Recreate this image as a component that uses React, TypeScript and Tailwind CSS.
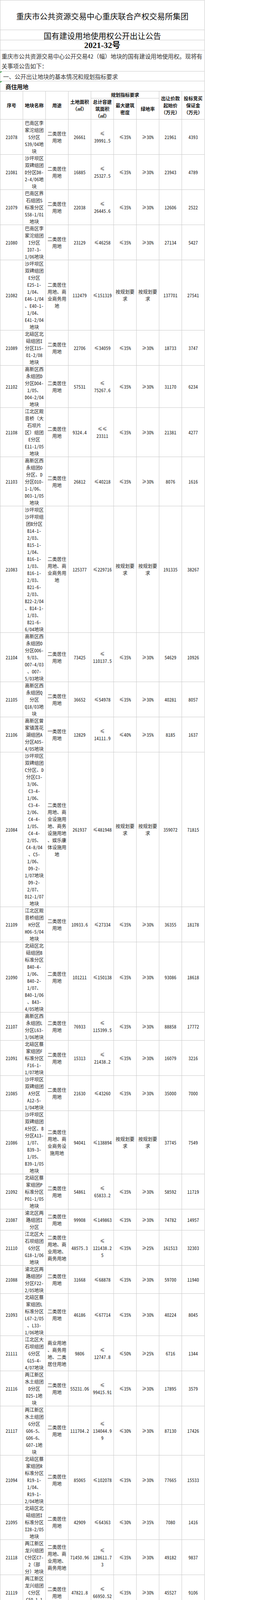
const R2 = '二类居住|用地';
const PLAN = '按规划要|求';

// [序号, 地块名称, 用途, 土地面积, 总计容建筑面积, 最大建筑密度, 绿地率, 起始价, 保证金]
// "|" marks a line break inside the cell
const rows: string[][] = [
  ['21078', '巴南区李|家沱组团|S分区|S39/04地|块', R2, '26661', '≤|39991.5', '≤35%', '≥30%', '21961', '4393'],
  ['21081', '沙坪坝区|双碑组团|D分区D8-|2-4/06地|块', R2, '16885', '≤|25327.5', '≤35%', '≥30%', '23943', '4789'],
  ['21079', '巴南区界|石组团S|标准分区|S58-1/01|地块', R2, '22038', '≤|26445.6', '≤35%', '≥30%', '12606', '2522'],
  ['21080', '巴南区李|家沱组团|I分区|I07-3-|1/06地块', R2, '23129', '≤46258', '≤35%', '≥30%', '27134', '5427'],
  ['21082', '沙坪坝区|双碑组团|E分区|E25-1-|1/04、|E46-1/04|、E40-1-|1/04、|E41-2/04|地块', '二类居住|用地、商|业商务用|地', '112479', '≤151319', PLAN, PLAN, '137701', '27541'],
  ['21089', '北碚区北|碚组团I|分区I15-|01-2/08|地块', R2, '22706', '≤34059', '≤35%', '≥30%', '18733', '3747'],
  ['21102', '高新区西|永组团D|分区D04-|1/05、|D04-2/04|地块', R2, '57531', '≤|75267.6', '≤35%', '≥30%', '31170', '6234'],
  ['21108', '江北区观|音桥（大|石坝片|区）组团|E分区|E11-1/05|地块', R2, '9324.4', '≤≤|23311', '≤35%', '≥30%', '21381', '4277'],
  ['21103', '高新区西|永组团O|分区、D|分区O10-|1-1/06、|D03-1/05|地块', R2, '26812', '≤40218', '≤35%', '≥30%', '8076', '1616'],
  ['21083', '沙坪坝区|沙坪坝组|团B分区|B14-1-|2/03、|B15-1-|1/04、|B16-1-|1/03、|B16-1-|2/03、|B21-6-|2/03、|B22-2/04|、B14-1-|1/03、|B21-6-|6/04地块', '二类居住|用地、商|业商务用|地', '125377', '≤229716', PLAN, PLAN, '191335', '38267'],
  ['21104', '高新区西|永组团O|分区O06-|9/03、|O07-4/03|、O07-|5/03地块', R2, '73425', '≤|110137.5', '≤35%', '≥30%', '54629', '10926'],
  ['21105', '高新区西|永组团Q|分区|Q18/03地|块', R2, '36652', '≤54978', '≤35%', '≥30%', '40281', '8057'],
  ['21106', '高新区曾|家镇莲花|湖组团A|分区A05-|4/05地块', '一类居住|用地', '12829', '≤|14111.9', '≤40%', '≥35%', '8185', '1637'],
  ['21084', '沙坪坝区|双碑组团|C分区、D|分区C3-|3/06、|C3-4-|1/06、|C3-4-|2/06、|C4-4-|1/05、|C4-4-|2/05、|C4-8/04|、C5-|1/06、|D9-2-|1/07地块|D9-2-|2/07、|D12-1/07|地块', '二类居住|用地、商|业设施用|地、商务|设施用地|、娱乐康|体设施用|地', '261937', '≤481948', PLAN, PLAN, '359072', '71815'],
  ['21109', '江北区观|音桥组团|H分区|H06-5/04|地块', R2, '10933.6', '≤27334', '≤35%', '≥30%', '36355', '18178'],
  ['21090', '北碚区北|碚组团B|标准分区|B40-4-|1/06、|B40-2-|1/07、|B40-1/06|、B43-|4/05地块', R2, '101211', '≤150138', '≤35%', '≥30%', '93086', '18618'],
  ['21107', '高新区西|永组团L|分区L63-|3/06地块', R2, '76933', '≤|115399.5', '≤35%', '≥30%', '88858', '17772'],
  ['21091', '北碚区蔡|家组团F|标准分区|F16-1-|1/07地块', R2, '15313', '≤|21438.2', '≤35%', '≥30%', '16079', '3216'],
  ['21085', '沙坪坝区|双碑组团|A分区|A12-5-|1/04地块', R2, '21630', '≤43260', '≤35%', '≥30%', '35000', '7000'],
  ['21086', '沙坪坝区|双碑组团|A分区、B|分区A13-|1/07、|B39-3-|1/05、|B39-1/05|地块', '二类居住|用地、商|业商务设|施用地', '94041', '≤138894', PLAN, PLAN, '37745', '7549'],
  ['21092', '北碚区蔡|家组团P|标准分区|P01-1/05|地块', R2, '54861', '≤|65833.2', '≤35%', '≥30%', '58592', '11719'],
  ['21087', '渝北区两|路组团I|分区', R2, '99908', '≤149863', '≤35%', '≥30%', '74782', '14957'],
  ['21110', '江北区大|石坝组团|G分区|G18-1/06|地块', '二类居住|用地、商|业用地、|商务用地', '48575.3', '≤|121438.2|5', '≤35%', '≥25%', '161513', '32303'],
  ['21088', '渝北区两|路组团F|分区F22-|2/05地块', R2, '31668', '≤68878', '≤35%', '≥30%', '59700', '11940'],
  ['21093', '北碚区蔡|家组团L|标准分区|L67-2/05|、L33-|1/06地块', R2, '46186', '≤67714', '≤35%', '≥30%', '40224', '8045'],
  ['21111', '江北区大|石坝组团|G分区|G15-4-|4/07地块', '商业用地|、商务用|地、二类|居住用地', '9806', '≤|12747.8', '≤50%', '≥25%', '6716', '1344'],
  ['21116', '两江新区|水土组团|D分区|D25-1地|块', R2, '55231.06', '≤|99415.91', '≤35%', '≥30%', '17895', '3579'],
  ['21117', '两江新区|水土组团|G分区|G06-5、|G06-6、|G07-1地|块', R2, '111704.2', '≤|134044.9|9', '≤30%', '≥30%', '87130', '17426'],
  ['21094', '北碚区蔡|家组团R|标准分区|R19-1-|1/04、|R19-1-|2/04地块', R2, '85065', '≤102078', '≤35%', '≥30%', '77665', '15533'],
  ['21095', '北碚区北|碚组团I|标准分区|I28-2/05|地块', R2, '42909', '≤64363', '≤30%', '≥35%', '7080', '1416'],
  ['21118', '两江新区|龙兴组团|C分区C7-|2（部|分）地块', '二类居住|用地、商|业用地、|商务用地', '71450.96', '≤|128611.7|3', '≤35%', '≥30%', '49182', '9837'],
  ['21119', '两江新区|龙兴组团|C分区|C50-1-1|地块', R2, '47821.8', '≤|66950.52', '≤35%', '≥30%', '45527', '9106'],
  ['21097', '大渡口区|大渡口组|团P分区|P2-3-2、|P2-3-6地|块', R2, '79854', '≤159708', '≤35%', PLAN, '127766', '25554'],
  ['21098', '大渡口区|大渡口组|团P分区|P2-8-2、|P2-8-3地|块', R2, '116823', '≤|175234.5', '≤35%', '≥35%', '140187', '28038'],
  ['21096', '南岸区弹|子石组团|J分区J4-|1/04、|J4-7/04|、J5-|6/04、|J15-1/04|、J3-|2/04、|J7-1/03|、J2-|1/04、|J4-5/04|地块', '商业用地|、二类居|住用地', '177152', '≤|299533.3', PLAN, PLAN, '300000', '60000'],
  ['21099', '大渡口区|大渡口组|团P分区|P2-8-7、|P2-8-8地|块', R2, '60395', '≤|90592.5', '≤35%', '≥35%', '72474', '14495'],
  ['21100', '大渡口区|大渡口组|团P分区|P2-10-5|地块', R2, '81927', '≤|98312.4', '≤35%', '≥35%', '78649', '15730'],
  ['21101', '大渡口区|大渡口组|团P分区|P2-12-2|、P2-12-|3、P2-|12-5地块', R2, '120175', '≤|180262.5', '≤35%', '≥35%', '144210', '28842'],
  ['21112', '九龙坡区|大渡口组|团D分区|D14-1-|1/03、|D11-1/03|、D12-|1/03、|D2-1/04|、D13-|1/03、|D13-2/04|地块', '二类居住|用地、文|化设施用|地、体育|用地、其|它商务用|地、商业|用地、社|会停车场|用地', '117234', '≤|237733.3', PLAN, PLAN, '150407', '30082'],
  ['21113', '九龙坡区|中梁山组|团G分区|G29-1-1-|1/04、|G26-8/05|、G27-|2/05地块', R2, '37540', '≤59446', PLAN, '≥30%', '40000', '8000'],
  ['21114', '九龙坡区|中梁山组|团D分区|D19/06、|D20-1/06|地块', '二类居住|用地、商|业用地、|商务用地', '75492', '≤188730', '≤35%', '≥30%', '114051', '22811'],
  ['21115', '九龙坡区|大杨石组|团W分区|W06-1-|1/05、|W05-2/06|地块', R2, '21232', '≤53080', '≤35%', '≥30%', '41855', '8371'],
];

function Lines({ text }: { text: string }) {
  return (
    <>
      {text.split('|').map((line, i) => (
        <span key={i} className="block whitespace-nowrap leading-[18px]">
          {line}
        </span>
      ))}
    </>
  );
}

// little green corner mark Excel leaves on text cells
function GreenMark() {
  return (
    <span className="absolute left-0 top-0 h-0 w-0 border-r-[4px] border-t-[4px] border-r-transparent border-t-[#1e9a2e]" />
  );
}

export default function App() {
  return (
    <div className="bg-white font-['Noto_Sans_Mono_CJK_SC','Noto_Sans_CJK_SC',sans-serif] text-[#222]">
      <div className="w-[523px] border-l border-t border-[#cacaca]">
        {/* title block */}
        <div className="flex h-[76px] items-center justify-center border-b border-r border-[#cacaca] pt-[7px] text-[20px] leading-none text-[#111]">
          重庆市公共资源交易中心重庆联合产权交易所集团
        </div>
        <div className="flex h-[26px] items-center justify-center border-b border-r border-[#cacaca] pt-[5px] text-[20px] leading-none text-[#111]">
          国有建设用地使用权公开出让公告
        </div>
        <div className="flex h-[26px] items-center justify-center border-b border-r border-[#cacaca] pt-[3px] font-['Liberation_Serif','Noto_Sans_CJK_SC',serif] text-[21.33px] font-bold leading-none text-[#111]">
          2021-32号
        </div>
        <div className="h-[54px] overflow-hidden border-b border-r border-[#cacaca] pl-[3px] pt-[1.5px] text-[14.67px] font-light leading-[25px] text-[#333]">
          <p className="whitespace-nowrap">重庆市公共资源交易中心公开交易42（幅）地块的国有建设用地使用权。现将有</p>
          <p className="whitespace-nowrap">关事项公告如下：</p>
        </div>
        <div className="relative flex h-[25px] items-center border-b border-r border-[#cacaca] pl-[7px] pt-[2px] text-[14.67px] font-light leading-none text-[#333]">
          <GreenMark />
          一、公开出让地块的基本情况和规划指标要求
        </div>
        <div className="relative flex h-[26px] items-center border-b border-r border-[#cacaca] pl-[13px] pt-[3px] text-[14.67px] font-bold leading-none text-[#222]">
          <GreenMark />
          商住用地
        </div>

        {/* table header: 规划指标要求 covers three columns */}
        <div className="grid h-[72px] grid-cols-[repeat(9,58px)] grid-rows-[18px_53px] border-b border-[#cacaca] text-[12px] font-bold text-[#111]">
          <div className="col-start-1 row-span-2 row-start-1 flex flex-col items-center justify-center border-r border-[#cacaca]">
            <Lines text="序号" />
          </div>
          <div className="col-start-2 row-span-2 row-start-1 flex flex-col items-center justify-center border-r border-[#cacaca]">
            <Lines text="地块名称" />
          </div>
          <div className="col-start-3 row-span-2 row-start-1 flex flex-col items-center justify-center border-r border-[#cacaca]">
            <Lines text="用途" />
          </div>
          <div className="col-start-4 row-span-2 row-start-1 flex flex-col items-center justify-center border-r border-[#cacaca]">
            <Lines text="土地面积|（㎡）" />
          </div>
          <div className="col-span-3 col-start-5 row-start-1 flex items-center justify-center border-b border-r border-[#cacaca] leading-[17px]">
            规划指标要求
          </div>
          <div className="col-start-8 row-span-2 row-start-1 flex flex-col items-center justify-center border-r border-[#cacaca]">
            <Lines text="出让价款|起始价|（万元）" />
          </div>
          <div className="col-start-9 row-span-2 row-start-1 flex flex-col items-center justify-center border-r border-[#cacaca]">
            <Lines text="投标竞买|保证金|（万元）" />
          </div>
          <div className="col-start-5 row-start-2 flex min-h-0 flex-col items-center justify-center border-r border-[#cacaca]">
            <Lines text="总计容建|筑面积|（㎡）" />
          </div>
          <div className="col-start-6 row-start-2 flex min-h-0 flex-col items-center justify-center border-r border-[#cacaca]">
            <Lines text="最大建筑|密度" />
          </div>
          <div className="col-start-7 row-start-2 flex min-h-0 flex-col items-center justify-center border-r border-[#cacaca]">
            <Lines text="绿地率" />
          </div>
        </div>

        {/* land parcels */}
        {rows.map((r) => {
          const n = Math.max(...r.map((c) => c.split('|').length));
          return (
            <div
              key={r[0]}
              className="grid grid-cols-[repeat(9,58px)] grid-rows-[100%] overflow-hidden border-b border-[#cacaca] text-[12px]"
              style={{ height: n * 18 }}
            >
              {r.map((c, i) => (
                <div key={i} className="flex min-h-0 flex-col items-center justify-center border-r border-[#cacaca] text-center">
                  <Lines text={c} />
                </div>
              ))}
            </div>
          );
        })}

        <div className="flex h-[18px] items-center border-b border-r border-[#cacaca] pl-[3px] text-[12px] font-bold leading-none text-[#111]">
          其他需要说明的宗地情况：
        </div>
        <div className="flex h-[18px] items-center border-b border-r border-[#cacaca] pl-[3px] text-[12px] leading-none">
          1.土地面积以实测为准。
        </div>
      </div>
    </div>
  );
}
